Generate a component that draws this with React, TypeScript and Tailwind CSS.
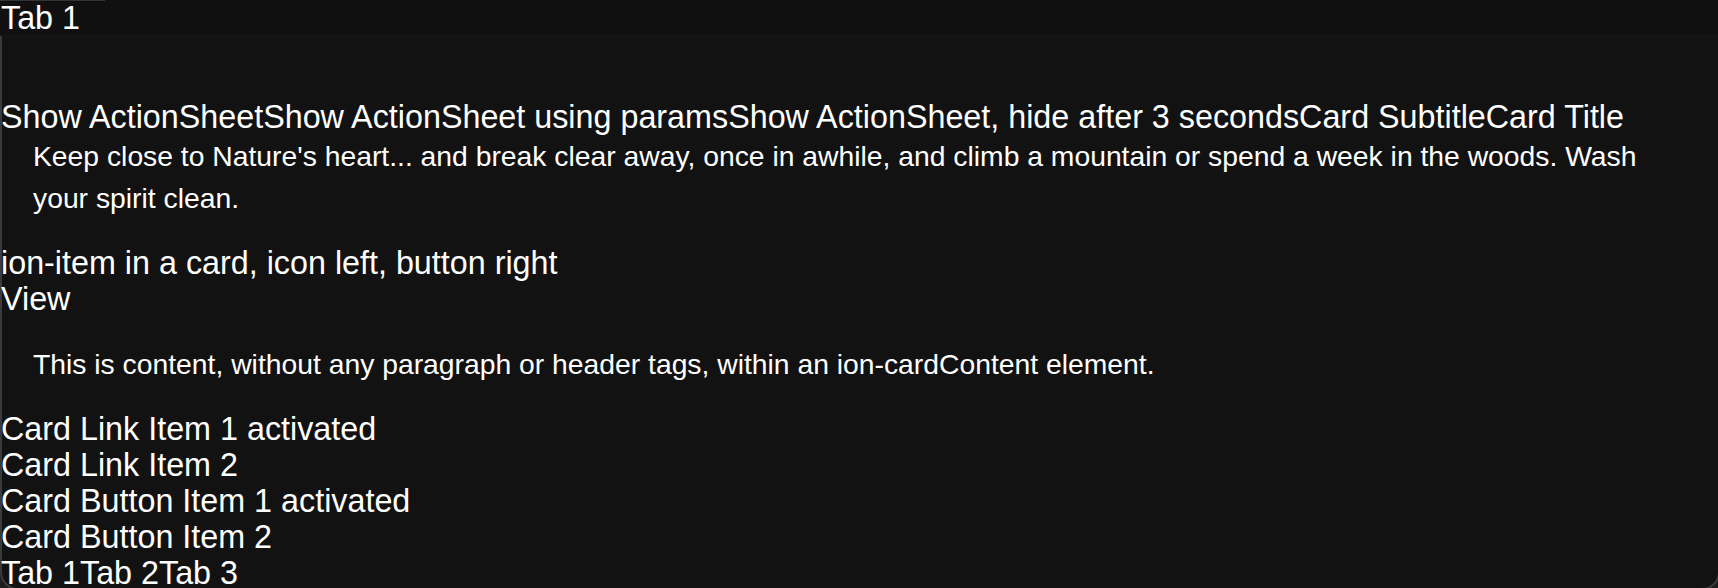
import React from "react";

export default function App() {
  return (
    <div className="w-[1718px] h-[588px] overflow-hidden bg-[#1e1e1e]" style={{ fontFamily: '"Liberation Sans", Arial, sans-serif' }}>
      <div className="w-[1720px] h-[590px] bg-[#121212] shadow-[inset_0_0_0_2px_#3a3a3a] rounded-b-[18px] overflow-hidden text-white text-[32.3px] leading-[36px] flex flex-col">
        <div className="relative bg-[#101010] border-b border-[#161616] h-[36px]">
          <div className="absolute left-0 top-0 h-[1px] w-[105px] bg-[#333333]" />
          <div className="relative h-[36px] pl-[1px]">Tab 1</div>
        </div>
        <div className="relative pt-[63px] flex flex-col pl-[1px]">
          <div>Show ActionSheetShow ActionSheet using paramsShow ActionSheet, hide after 3 secondsCard SubtitleCard Title</div>
          <div className="pl-[32px] pr-[48px] pb-[26px] text-[28.3px] leading-[42px]">
            Keep close to Nature's heart... and break clear away, once in awhile, and climb a mountain or spend a week in the woods. Wash your spirit clean.
          </div>
          <div>ion-item in a card, icon left, button right</div>
          <div>View</div>
          <div className="pl-[32px] pr-[48px] py-[26px] text-[28.3px] leading-[42px]">
            This is content, without any paragraph or header tags, within an ion-cardContent element.
          </div>
          <div>Card Link Item 1 activated</div>
          <div>Card Link Item 2</div>
          <div>Card Button Item 1 activated</div>
          <div>Card Button Item 2</div>
          <div>Tab 1Tab 2Tab 3</div>
        </div>
      </div>
    </div>
  );
}
